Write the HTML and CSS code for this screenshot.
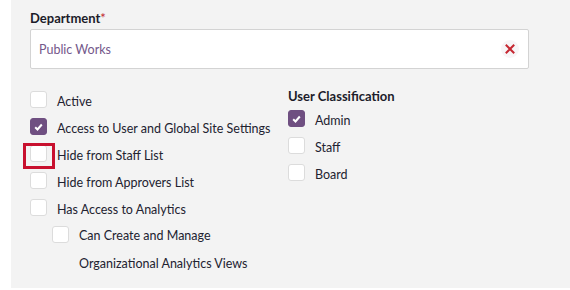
FILE: index.html
```html
<!DOCTYPE html>
<html>
<head>
<meta charset="utf-8">
<link rel="stylesheet" href="styles.css">
</head>
<body>
<div class="panel">
  <div class="field">
    <label class="field-label">Department<span class="req">*</span></label>
    <div class="select">
      <span class="select-value">Public Works</span>
      <span class="clear">
        <svg width="10" height="10" viewBox="0 0 10 10"><path d="M1.5 1.5 L8.5 8.5 M8.5 1.5 L1.5 8.5" stroke="#c62832" stroke-width="2" stroke-linecap="square" fill="none"/></svg>
      </span>
    </div>
  </div>
  <div class="options">
    <div class="col">
      <div class="row"><span class="box"></span><span class="text">Active</span></div>
      <div class="row"><span class="box checked"><svg width="9" height="8" viewBox="0 0 9 8"><path d="M1.2 4.3 L3.5 6.5 L7.8 1.5" stroke="#fff" stroke-width="2" fill="none"/></svg></span><span class="text">Access to User and Global Site Settings</span></div>
      <div class="row"><span class="box highlighted"><span class="ring"></span></span><span class="text">Hide from Staff List</span></div>
      <div class="row"><span class="box"></span><span class="text">Hide from Approvers List</span></div>
      <div class="row"><span class="box"></span><span class="text">Has Access to Analytics</span></div>
      <div class="row sub"><span class="box"></span><span class="text narrow">Can Create and Manage Organizational Analytics Views</span></div>
    </div>
    <div class="col">
      <div class="heading">User Classification</div>
      <div class="row"><span class="box checked"><svg width="9" height="8" viewBox="0 0 9 8"><path d="M1.2 4.3 L3.5 6.5 L7.8 1.5" stroke="#fff" stroke-width="2" fill="none"/></svg></span><span class="text">Admin</span></div>
      <div class="row"><span class="box"></span><span class="text">Staff</span></div>
      <div class="row"><span class="box"></span><span class="text">Board</span></div>
    </div>
  </div>
</div>
</body>
</html>
```
FILE: styles.css
```css
html, body {
  margin: 0;
  padding: 0;
  background: #ffffff;
}
body {
  font-family: Lato, "Open Sans", sans-serif;
  font-size: 12.5px;
  color: #222230;
}
.panel {
  margin-left: 11px;
  height: 288px;
  background: #f3f3f3;
  padding: 10px 0 0 19px;
  box-sizing: border-box;
}
.field-label {
  display: block;
  font-weight: 700;
  font-size: 13px;
  line-height: 16px;
  color: #1c1c2a;
}
.req {
  color: #c0272d;
  font-weight: 400;
}
.select {
  margin-top: 3px;
  width: 499px;
  height: 40px;
  box-sizing: border-box;
  background: #fff;
  border: 1px solid #d3d3d3;
  border-radius: 2px;
  display: flex;
  align-items: center;
  justify-content: space-between;
  padding: 0 9px 0 8px;
}
.select-value {
  color: #74588a;
  font-size: 12.5px;
}
.clear {
  width: 18px;
  height: 18px;
  border-radius: 50%;
  background: #f7f5f7;
  display: flex;
  align-items: center;
  justify-content: center;
}
.options {
  margin-top: 22px;
  display: grid;
  grid-template-columns: 258px auto;
}
.row {
  display: flex;
  align-items: flex-start;
  min-height: 27px;
  position: relative;
}
.row.sub {
  padding-left: 22px;
}
.box {
  flex: none;
  width: 17px;
  height: 17px;
  box-sizing: border-box;
  background: #fff;
  border: 1px solid #dcdcdc;
  border-radius: 3px;
  margin-right: 10px;
  position: relative;
  display: flex;
  align-items: center;
  justify-content: center;
}
.box.checked {
  background: #6f4f81;
  border-color: #6f4f81;
}
.ring {
  position: absolute;
  left: -8px;
  top: -3px;
  width: 32px;
  height: 26px;
  box-sizing: border-box;
  border: 3px solid #c8102e;
}
.text {
  line-height: 17px;
  margin-top: 2px;
}
.text.narrow {
  width: 175px;
  line-height: 28px;
  margin-top: -4px;
}
.heading {
  font-weight: 700;
  font-size: 13px;
  line-height: 16px;
  margin-top: -3px;
  margin-bottom: 6px;
  color: #1c1c2a;
}
```
